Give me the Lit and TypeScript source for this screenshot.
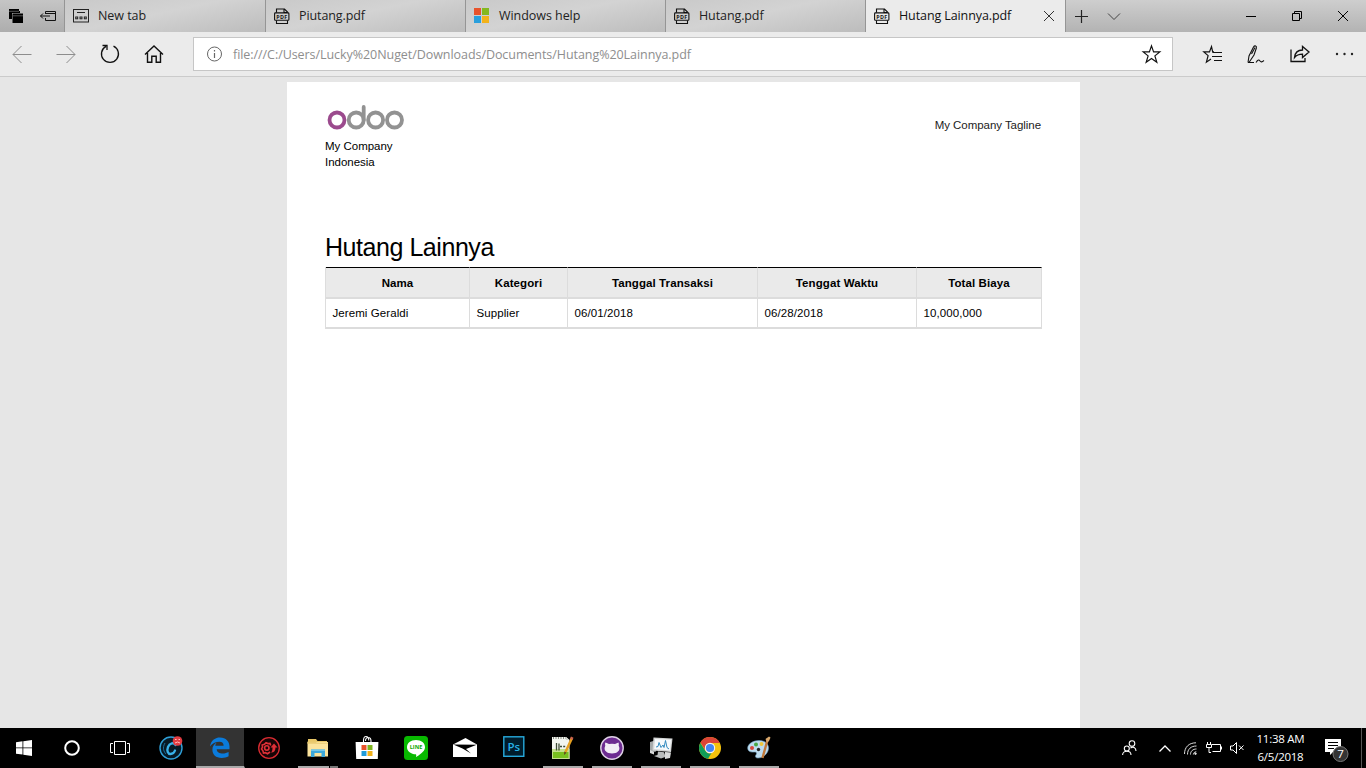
import { LitElement, html, css, svg } from 'lit';
import { customElement } from 'lit/decorators.js';

const pdfIcon = html`<svg width="16" height="17" viewBox="0 0 16 17" fill="none" stroke="#111" stroke-width="1.100">
  <path d="M2.500 4.500V1h8l3 3v.5M2.500 12.500v3h11v-3M10 1v3.500h3.500"/>
  <rect x=".6" y="4.900" width="14.300" height="7.400" rx=".8"/>
  <text x="7.800" y="10.600" text-anchor="middle" font-family="Open Sans" font-weight="700" font-size="5.400" fill="#111" stroke="none" textLength="11">PDF</text></svg>`;

const newTabIcon = html`<svg width="16" height="14" viewBox="0 0 16 14" fill="none" stroke="#222" stroke-width="1">
  <rect x=".5" y=".5" width="15" height="12.500"/><path d="M4 3.500h8"/>
  <rect x="2.700" y="8" width="2" height="1.800"/><rect x="7" y="8" width="2" height="1.800"/><rect x="11.300" y="8" width="2" height="1.800"/></svg>`;

const msIcon = html`<svg width="16" height="16" viewBox="0 0 16 16"><path fill="#e8532b" d="M0 0h7v7H0z"/><path fill="#84b81f" d="M8 0h7v7H8z"/><path fill="#2a9fdc" d="M0 8h7v7H0z"/><path fill="#f2b21a" d="M8 8h7v7H8z"/></svg>`;

const star = 'M8.500 0.900l2.100 6h6.200l-4.900 4 1.900 6.300-5.300-3.700-5.300 3.700 1.900-6.300-4.900-4h6.200z';

const tabs = [
  { t: 'New tab', icon: newTabIcon, ls: 'a' },
  { t: 'Piutang.pdf', icon: pdfIcon, ls: 'b' },
  { t: 'Windows help', icon: msIcon, ls: 'c' },
  { t: 'Hutang.pdf', icon: pdfIcon, ls: 'b' },
];

const apps = [
  { mark: '', icon: svg`<circle cx="12" cy="12" r="11" fill="#071a26" stroke="#2fa0d8" stroke-width="1.400"/><path d="M16.500 9c-1.500-3-6-2-7.500 2s0 7 2.500 7 4-2 4.500-3.500" fill="none" stroke="#39b2ea" stroke-width="2.300" stroke-linecap="round"/><path d="M6 7c-3 5-1 9 1 11" fill="none" stroke="#1c6f9c"/><circle cx="18.500" cy="5" r="4.800" fill="#e23b41"/><path d="M16 3.500h1.600M19.500 3.500H21M16 7q2.500-2 5 0" stroke="#fbb" fill="none"/>` },
  { mark: 'active', icon: svg`<path fill="#0b7bdb" d="M2 10.500C3 4 7.500 1.500 12 1.500c6 0 9.500 4.200 9.500 9v2.700H8.700c.2 2.900 2.900 4.400 6 4.400 2.300 0 4.200-.6 5.900-1.500v4.200c-2 1.100-4.300 1.600-6.900 1.600-5.800 0-9.300-3.300-9.300-8.200 0-3.200 1.600-5.600 4.500-7.100-1 .9-1.400 1.900-1.600 3.100h8.300c0-2.500-1.300-4-4.200-4C7.500 5.700 4 7.700 2 10.500z"/>` },
  { mark: '', icon: svg`<circle cx="12" cy="12" r="10.300" fill="#180506" stroke="#d92b31" stroke-width="1.300"/><g fill="none" stroke="#df3037" stroke-width="1.600"><path d="M13 16l-2.500 1.700-2-1-2 .3-.6-2.200L4.500 13l1-2-.3-2 2.200-.7L9 6.800l2 .8 2-.2.700 2"/><circle cx="9.800" cy="12" r="2.200"/></g><path d="M13 16.500c2 0 2.500-2 2.500-5h-2L17 7.500l3.500 4h-2c0 3.500-1.500 5.500-5.500 5z" fill="#df3037"/>` },
  { mark: 'split', icon: svg`<path fill="#e8c667" d="M2 3h8l1.500 2H21v4H2z"/><path fill="#fbe39c" d="M1.500 6H22v14.500H1.500z"/><path fill="#eacb73" d="M1.500 5.500h8l1.300 1.300H22v1H1.500z"/><path fill="#3ca9db" d="M5 13.500h14V21h-3.500v-4h-7v4H5z"/><path fill="#74c8ea" d="M5 13.500h14V15H5z"/>` },
  { mark: '', icon: svg`<path d="M8.500 7V4.500C8.500 2 9.500.5 11 .5s2.800 1.500 2.800 4M10.500 5c0-2.500 1.300-3.500 2.700-3.500S16 2.600 16 5v2" fill="none" stroke="#fff" stroke-width="1.100"/><path fill="#fff" d="M.6 6h22.800l-.6 17H1.200z"/><path fill="#e8532b" d="M6.500 9h5v5h-5z"/><path fill="#7eb51e" d="M12.500 9h5v5h-5z"/><path fill="#219bd9" d="M6.500 15h5v5h-5z"/><path fill="#f1b11a" d="M12.500 15h5v5h-5z"/>` },
  { mark: '', icon: svg`<rect width="24" height="24" rx="3.500" fill="#08b900"/><path fill="#fff" d="M12 4c5.300 0 9 3 9 7.200 0 3-2.600 5.900-9 9.800.3-1.300.5-2.300-.2-2.700C7 18 3 15.300 3 11.200S6.700 4 12 4z"/><text x="12" y="13.200" text-anchor="middle" font-family="Open Sans" font-weight="700" font-size="5.600" fill="#08a900">LINE</text>` },
  { mark: '', icon: svg`<path fill="#fff" d="M0 8.500L12.500 2 24 8.500V21H0z"/><path fill="#000" d="M.3 8.500L23.700 8.700 13 13l5 4.500-8.500-5z"/>` },
  { mark: '', icon: svg`<rect x="1.800" y=".8" width="20" height="19.500" fill="#001c2b" stroke="#26a9dc" stroke-width="1.400"/><text x="11.800" y="15" text-anchor="middle" font-family="Open Sans" font-weight="600" font-size="11.500" fill="#26b3e8">Ps</text>` },
  { mark: 'run', icon: svg`<path fill="#f3f5ef" d="M1 1h14l3.500 3v19H1z"/><path fill="#c5e08c" d="M1 13h17.500v10H1z"/><path fill="#78c01f" d="M2 16h15.500v6H2z"/><path stroke="#8c9088" stroke-width="2" stroke-dasharray="1 1.500" d="M2 2h13"/><path fill="#d5d8d1" d="M15 1v3h3.500z"/><path fill="none" stroke="#3e4d35" stroke-width="1.300" d="M5.500 7v7.500M8 7.500v7"/><path stroke="#3e4d35" stroke-width="1.300" stroke-dasharray="2 1.200" d="M9 10.500h6"/><path stroke="#e6a020" stroke-width="2.500" d="M21 2l-6.500 14"/><path d="M13 19l.3-3.500 2.300 1.200z" fill="#664319"/><path d="M20 .5l2.500 1.200-1 2.300-2.500-1.200z" fill="#ca644c"/>` },
  { mark: 'run', icon: svg`<circle cx="12" cy="12" r="11.200" fill="#6d2c91" stroke="#ddd0e4" stroke-width="1.400"/><path fill="#f2edf5" d="M5.500 6.500L9 8q3-.5 6 0l3.500-1.500q.6 1.600.2 3.200c1.200 2.300.9 4.500-.8 5.900-1.300 1.500-3.300 1.900-5.900 1.900s-4.600-.4-5.900-1.900c-1.700-1.400-2-3.600-.8-5.900-.4-1.600-.3-2.400.2-3.200z"/>` },
  { mark: 'run', icon: svg`<path fill="#a6aaab" d="M1 6l5-1.500 1 11-6 1z"/><path fill="#d4d6d6" d="M4.500 1.500l19 1L22 16 3.500 14.500z"/><path fill="#f7fafc" d="M6 3l16 .8L21 14.500 5.200 13z"/><path d="M7 11l2-.5 1-4 2 5 2-2.500 1 2.500 1.500-7 1.500 7 2 1.500" fill="none" stroke="#328bc0"/><path fill="#b9bcbc" d="M9 15.500l6 .7 1 2.800 3 1-7 2.500L5 20l3.500-1z"/><path fill="#d9dbdb" d="M1 14l4 2v2.500L1 17zM16 16l6 .5-1 5.500-5 1z"/>` },
  { mark: 'run', icon: svg`<circle cx="12" cy="12" r="11" fill="#f4c20d"/><path fill="#0f9d58" d="M2.300 6.800l5 8A5 5 0 0 0 13.500 17L10 22.800A11 11 0 0 1 2.300 6.800z"/><path fill="#db4437" d="M12 7h9.700A11 11 0 0 0 2.500 6.500l5 8A5.200 5.200 0 0 1 12 7z"/><circle cx="12" cy="12" r="5.200" fill="#f4f4f4"/><circle cx="12" cy="12" r="4.100" fill="#4285f4"/>` },
  { mark: 'run', icon: svg`<path fill="#bddcf0" stroke="#6f9fbf" stroke-width=".6" d="M12 4.500c5.500 0 9.500 3 9.500 7.500S17 22 11 22c-3 0-3-2-1.800-3.500 1-1.600-.2-2.800-2-2.500C3 16.500.7 15 .7 12 .7 8 6 4.500 12 4.500z"/><circle cx="5" cy="12" r="2" fill="#d9473d"/><circle cx="9" cy="8.500" r="2" fill="#49a846"/><circle cx="14.500" cy="8" r="2" fill="#efc63a"/><circle cx="11.500" cy="13.500" r="1.700" fill="#222"/><path d="M20.500 4l-5 18" stroke="#c0793b" stroke-width="2.400"/><path d="M18.500 3l3.500-2.500 1.500 1-1.500 3.500-2 1.500z" fill="#d9a86c"/>` },
];

@customElement('app-root')
export class AppRoot extends LitElement {
  static styles = css`
    :host { display: flex; flex-direction: column; width: 1366px; height: 768px; overflow: hidden; background: #e6e6e6; font-family: "Open Sans", "Noto Sans", sans-serif; font-size: 12.500px; color: #222; }
    * { box-sizing: border-box; }
    svg { display: block; flex: none; overflow: visible; }
    .strip { height: 32px; flex: none; display: flex; background: linear-gradient(#cecece, #b3b3b3); }
    .sets { width: 64px; display: flex; align-items: center; gap: 16px; padding-left: 8px; background: linear-gradient(#c5c5c5, #adadad); }
    .tab { width: 200px; border-left: 1px solid #959595; display: flex; align-items: center; padding-left: 8px; background: linear-gradient(168deg, #c9c9c9, #d3d3d3 45%, #bcbcbc); white-space: nowrap; }
    .tab:nth-child(2) { width: 201px; }
    .tab svg { width: 16px; margin-right: 9px; }
    .tab span { padding-bottom: 2px; }
    .tab.on { background: #ebebeb; padding-right: 11px; justify-content: space-between; color: #111; }
    .lab { display: flex; align-items: center; }
    .tab .x { width: 10px; margin: 0; }
    .a { letter-spacing: -.05px; } .b { letter-spacing: -.1px; } .c { letter-spacing: -.05px; }
    .extra { flex: 1; border-left: 1px solid #959595; display: flex; align-items: center; padding: 0 17px 0 9px; }
    .extra .sp { flex: 1; }
    .chev { margin-left: 20px; }
    .restore { margin: 0 36px; }
    .close { margin-right: 1px; }
    .bar { height: 45px; flex: none; display: flex; align-items: center; background: #ebebeb; border-bottom: 1px solid #cbcbcb; }
    .nav { width: 193px; display: flex; padding-left: 12px; gap: 24px; align-items: center; }
    .addr { width: 980px; height: 34px; background: #fff; border: 1px solid #c6c6c6; display: flex; align-items: center; padding: 0 11px 0 13px; color: #8e8e8e; }
    .url { flex: 1; margin-left: 10px; white-space: nowrap; letter-spacing: -.06px; }
    .tools { flex: 1; display: flex; align-items: center; padding: 0 12px 0 30px; justify-content: space-between; }
    .view { flex: 1; min-height: 0; padding: 5px 0 0 287px; }
    .page { width: 793px; height: 646px; background: #fff; padding: 22px 38px 0; font-family: "Liberation Sans", Arial, sans-serif; font-size: 11.500px; color: #000; }
    .head { display: flex; justify-content: space-between; height: 128px; line-height: 16px; }
    .logo { margin: 0 0 6px 2px; }
    .tag { margin: 13px 1px 0 0; color: #222; letter-spacing: -.05px; }
    .co { letter-spacing: -.02px; }
    h1 { font-size: 25px; font-weight: 400; line-height: 30px; margin: 0; height: 35px; letter-spacing: -.45px; white-space: nowrap; }
    .table { width: 717px; display: grid; grid-template-columns: 144px 98px 190px 159px 125px; border-left: 1px solid #ddd; }
    .th, .td { border-right: 1px solid #dcdcdc; border-bottom: 2px solid #dcdcdc; white-space: nowrap; }
    .th { height: 32px; border-top: 1px solid #000; background: #eaeaea; font-weight: 700; text-align: center; line-height: 30px; letter-spacing: .1px; }
    .td { height: 30px; line-height: 29px; padding-left: 6.500px; letter-spacing: .08px; }
    .task { height: 40px; flex: none; background: #000; display: flex; color: #fff; }
    .sys { width: 147px; display: flex; align-items: center; padding-left: 16px; gap: 30px; }
    .app { width: 49px; height: 40px; display: flex; justify-content: center; align-items: center; border-right: 1px solid #000; background-repeat: no-repeat; }
    .active { background: #333; border-bottom: 2px solid #a9a9a9; padding-top: 2px; }
    .run { background-image: linear-gradient(#aaa, #aaa); background-size: 40px 2px; background-position: 4px 38px; }
    .split { background-image: linear-gradient(90deg, #aaa 31px, #000 31px, #000 32px, #777 32px); background-size: 40px 2px; background-position: 4px 38px; }
    .tray { margin-left: auto; display: flex; align-items: center; }
    .up { margin-left: 22px; } .wifi { margin-left: 13px; } .bat { margin-left: 9px; } .vol { margin-left: 8px; }
    .clock { font-size: 11.500px; line-height: 18px; text-align: center; width: 60px; letter-spacing: -.25px; margin: 0 14px 0 7px; white-space: nowrap; padding: 0 1px 1px 0; }
    .edge { border-left: 1px solid #555; width: 5px; height: 40px; margin-left: 12px; }
  `;

  render() {
    return html`
      <div class="strip">
        <div class="sets">
          <svg width="16" height="16" viewBox="0 0 16 16"><path d="M1 1h10v2h1v2H4v6H1z" fill="#000"/><path d="M4.500 5.500H15V15H4.500z"/><path d="M1 3.300h10M5 7.800h10" stroke="#aaa" stroke-width=".5"/></svg>
          <svg width="17" height="14" viewBox="0 0 17 14" fill="none" stroke="#111"><path d="M5.500 5V2.500h10v9h-10V9M5 4.500h11M.5 7H10M3 4.500L.5 7 3 9.500"/></svg>
        </div>
        ${tabs.map(x => html`<div class="tab">${x.icon}<span class=${x.ls}>${x.t}</span></div>`)}
        <div class="tab on"><div class="lab">${pdfIcon}<span class="b">Hutang Lainnya.pdf</span></div>
          <svg class="x" width="10" height="10" viewBox="0 0 10 10" stroke="#333"><path d="M0 0l10 10M10 0L0 10"/></svg></div>
        <div class="extra">
          <svg width="13" height="13" viewBox="0 0 13 13" stroke="#222" stroke-width="1.200"><path d="M0 6.500h13M6.500 0v13"/></svg>
          <svg class="chev" width="12" height="7" viewBox="0 0 12 7" fill="none" stroke="#444"><path d="M0 .5l6 6 6-6"/></svg>
          <span class="sp"></span>
          <svg width="10" height="10" viewBox="0 0 10 10" stroke="#000"><path d="M0 5.500h10"/></svg>
          <svg class="restore" width="10" height="10" viewBox="0 0 10 10" fill="none" stroke="#000"><path d="M.5 2.500h7v7h-7zM2.500 2.500v-2h7v7h-2"/></svg>
          <svg class="close" width="10" height="10" viewBox="0 0 10 10" stroke="#000"><path d="M0 0l10 10M10 0L0 10"/></svg>
        </div>
      </div>
      <div class="bar">
        <div class="nav">
          <svg width="20" height="18" viewBox="0 0 20 18" fill="none" stroke="#8d8d8d"><path d="M1 9.500h18.500M9.500 1L1 9.500 9.500 18"/></svg>
          <svg width="20" height="18" viewBox="0 0 20 18" fill="none" stroke="#8d8d8d"><path d="M.5 9.500H19M10.500 1L19 9.500 10.500 18"/></svg>
          <svg width="20" height="20" viewBox="0 0 20 20" fill="none" stroke="#111" stroke-width="1.300"><path d="M13.500 2.200A8.500 8.500 0 1 1 6 2.400M2.500 1.500h4.500v4.500"/></svg>
          <svg width="20" height="20" viewBox="0 0 20 20" fill="none" stroke="#111" stroke-width="1.400"><path d="M1 10.500l9-8.500 9 8.500M3.500 9v9.200h4.300v-6h4.400v6h4.300V9"/></svg>
        </div>
        <div class="addr">
          <svg width="16" height="16" viewBox="0 0 16 16" fill="none" stroke="#666"><circle cx="7.500" cy="8" r="7"/><path d="M7.500 7v5M7.500 4v1.500" stroke-width="1.200"/></svg>
          <span class="url">file:///C:/Users/Lucky%20Nuget/Downloads/Documents/Hutang%20Lainnya.pdf</span>
          <svg width="19" height="18" viewBox="-1 0 19 18" fill="none" stroke="#111" stroke-width="1.200"><path d=${star}/></svg>
        </div>
        <div class="tools">
          <svg width="20" height="19" viewBox="0 0 20 19" fill="none" stroke="#111" stroke-width="1.200"><path d="M11 6.900H9.700L8.500 1.500 6.500 6.900H.8l4.300 3.700-1.700 6.600L8 14M9.500 7.500h9.500M9 11.500h10M11 15.500h8"/></svg>
          <svg width="18" height="19" viewBox="0 0 18 19" fill="none" stroke="#111" stroke-width="1.100"><path d="M1 17.500L2 11 6.500 2c1.300-2 3.500-1 2.800 1.300L7 10l-5 7.500M4.500 9L8 2.500M1 17.500h6M9 17.500c2-3 3-3 4-1.500s2 1 4-.5"/></svg>
          <svg width="20" height="18" viewBox="0 0 20 18" fill="none" stroke="#111" stroke-width="1.300"><path d="M1 4.500V16.500h14V13M4.500 12.500C5 8 8 5 12.500 5V1.500L19 7l-6.500 5.500V9.200c-3.500 0-6 .8-8 3.300z"/></svg>
          <svg width="20" height="4" viewBox="0 0 20 4" fill="#222"><circle cx="3" cy="2" r="1.200"/><circle cx="10.500" cy="2" r="1.200"/><circle cx="18" cy="2" r="1.200"/></svg>
        </div>
      </div>
      <div class="view">
        <div class="page">
          <div class="head">
            <div class="co">
              <svg class="logo" width="78" height="28" viewBox="0 0 78 28" fill="none" stroke-width="3.800"><circle cx="10" cy="16" r="7.500" stroke="#9b4a8d"/><g stroke="#929292"><circle cx="29.200" cy="16" r="7.500"/><path d="M36.700 3v13" stroke-linecap="round"/><circle cx="48.600" cy="16" r="7.500"/><circle cx="67.500" cy="16" r="7.500"/></g></svg>
              <div>My Company</div><div>Indonesia</div>
            </div>
            <div class="tag">My Company Tagline</div>
          </div>
          <h1>Hutang Lainnya</h1>
          <div class="table">
            ${['Nama', 'Kategori', 'Tanggal Transaksi', 'Tenggat Waktu', 'Total Biaya'].map(x => html`<div class="th">${x}</div>`)}
            ${['Jeremi Geraldi', 'Supplier', '06/01/2018', '06/28/2018', '10,000,000'].map(x => html`<div class="td">${x}</div>`)}
          </div>
        </div>
      </div>
      <div class="task">
        <div class="sys">
          <svg width="16" height="16" viewBox="0 0 16 16" fill="#fff"><path d="M0 2.200l6.500-.9v6.200H0zM7.300 1.200L16 0v7.500H7.300zM0 8.300h6.500v6.200L0 13.700zM7.300 8.300H16V16l-8.700-1.300z"/></svg>
          <svg width="18" height="18" viewBox="0 0 18 18" fill="none" stroke="#fff" stroke-width="2"><circle cx="10" cy="9" r="6.800"/></svg>
          <svg width="20" height="14" viewBox="0 0 20 14" fill="none" stroke="#fff"><path d="M4.500.5h11v13h-11zM3 2.500H.5v9H3M17 2.500h2.500v9H17"/></svg>
        </div>
        ${apps.map(x => html`<div class="app ${x.mark}"><svg width="24" height="24" viewBox="0 0 24 24">${x.icon}</svg></div>`)}
        <div class="tray">
          <svg width="15" height="16" viewBox="0 0 15 16" fill="none" stroke="#fff" stroke-width="1.100"><circle cx="10" cy="3.500" r="2.800"/><circle cx="4.800" cy="8.500" r="2.500"/><path d="M.6 15c0-5 8.400-5 8.400 0M8.500 8c3-2 5.500 0 5.500 3"/></svg>
          <svg class="up" width="12" height="7" viewBox="0 0 12 7" fill="none" stroke="#fff" stroke-width="1.300"><path d="M.5 6.500l5.500-5.500 5.500 5.500"/></svg>
          <svg class="wifi" width="13" height="13" viewBox="0 0 13 13" fill="none" stroke="#ddd"><path d="M.5 12C.5 5 5 .8 12 .8M3.500 12.500C3.500 7 7 4 12.500 4M6.500 12.500c0-3.500 2.500-5.500 6-5.500M9.300 12.500c0-1.500 1.300-2.700 3-2.700"/><circle cx="11.500" cy="11.700" r=".8" fill="#fff"/></svg>
          <svg class="bat" width="16" height="12" viewBox="0 0 16 12" fill="none" stroke="#fff"><path d="M6 2.500h8.500v7h-8M15.500 4.500v3M1.500 0v2.500M4.500 0v2.500M.5 2.500h5v3h-5zM3 5.500V10.500h2"/></svg>
          <svg class="vol" width="14" height="12" viewBox="0 0 14 12" fill="none" stroke="#fff"><path d="M.5 4h2.500l3.500-3.500v11L3 8H.5zM9 3.500l4.500 4.500M13.500 3.500L9 8"/></svg>
          <div class="clock"><div>11:38 AM</div><div>6/5/2018</div></div>
          <svg width="24" height="24" viewBox="0 0 24 24"><path fill="#fff" d="M0 3h16v13H8l-3 3v-3H0z"/><path stroke="#000" d="M3 6.500h10M3 9.500h10M3 12.500h6"/><circle cx="15.500" cy="18" r="7.500" fill="#343434" stroke="#777"/><text x="15.500" y="22.200" fill="#fff" font-family="Open Sans" font-size="11.500" text-anchor="middle">7</text></svg>
          <div class="edge"></div>
        </div>
      </div>`;
  }
}
